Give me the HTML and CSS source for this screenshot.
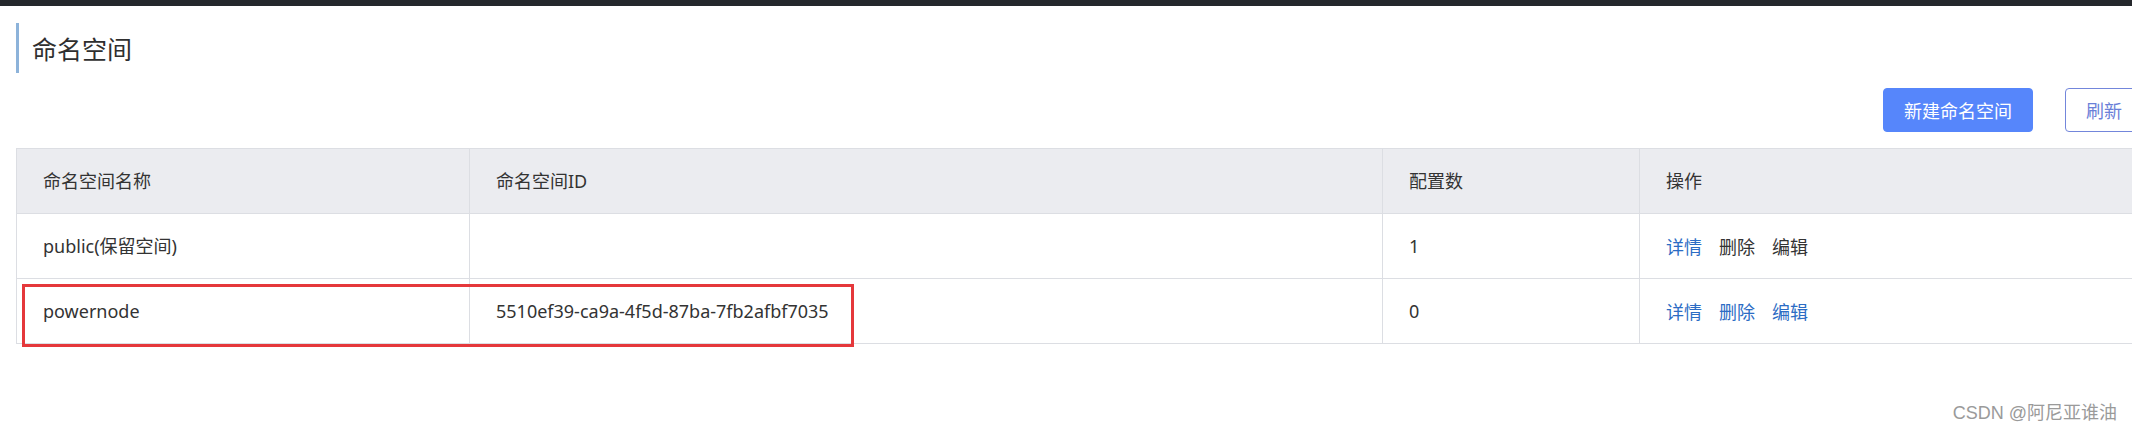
FILE: index.html
```html
<!DOCTYPE html>
<html lang="zh-CN">
<head>
<meta charset="utf-8">
<title>命名空间</title>
<link rel="stylesheet" href="styles.css">
</head>
<body>
<div class="topbar"></div>
<div class="page">
  <div class="title"><span class="title-text">命名空间</span></div>
  <div class="toolbar">
    <button class="btn btn-primary">新建命名空间</button>
    <button class="btn btn-secondary">刷新</button>
  </div>
  <div class="grid">
    <div class="row head">
      <div class="cell">命名空间名称</div>
      <div class="cell">命名空间ID</div>
      <div class="cell">配置数</div>
      <div class="cell">操作</div>
    </div>
    <div class="row">
      <div class="cell">public(保留空间)</div>
      <div class="cell"></div>
      <div class="cell">1</div>
      <div class="cell ops"><a class="op link">详情</a><a class="op">删除</a><a class="op">编辑</a></div>
    </div>
    <div class="row">
      <div class="cell">powernode</div>
      <div class="cell">5510ef39-ca9a-4f5d-87ba-7fb2afbf7035</div>
      <div class="cell">0</div>
      <div class="cell ops"><a class="op link">详情</a><a class="op link">删除</a><a class="op link">编辑</a></div>
    </div>
    <div class="annot"></div>
  </div>
</div>
<div class="watermark">CSDN @阿尼亚谁油</div>
</body>
</html>
```
FILE: styles.css
```css
html, body {
  margin: 0;
  padding: 0;
  overflow: hidden;
  background: #ffffff;
}
body {
  width: 2132px;
  height: 435px;
  position: relative;
  font-family: "Noto Sans", "Noto Sans CJK SC", sans-serif;
  color: #333333;
}
.topbar {
  height: 6px;
  background: #25282c;
}
.page {
  width: 2127px;
  margin-left: 16px;
}
.title {
  margin-top: 17px;
  height: 50px;
  border-left: 3px solid #8db3da;
  padding-left: 13px;
  display: flex;
  align-items: center;
}
.title-text {
  font-family: "Noto Sans CJK SC", sans-serif;
  font-size: 25px;
  line-height: 1;
  color: #2f2f2f;
}
.toolbar {
  margin-top: 15px;
  height: 44px;
  display: flex;
  justify-content: flex-end;
  gap: 32px;
}
.btn {
  height: 44px;
  padding: 0 20px;
  font-family: "Noto Sans CJK SC", sans-serif;
  font-size: 18px;
  line-height: 1;
  border-radius: 4px;
  box-sizing: border-box;
  cursor: pointer;
}
.btn-primary {
  background: #5686fb;
  color: #ffffff;
  border: 1px solid #5686fb;
}
.btn-secondary {
  background: #ffffff;
  color: #6a80d8;
  border: 1px solid #7386db;
}
.grid {
  margin-top: 16px;
  border: 1px solid #dcdee3;
  border-bottom: none;
  position: relative;
}
.row {
  display: grid;
  grid-template-columns: 452px 913px 257px 1fr;
  height: 65px;
  box-sizing: border-box;
  border-bottom: 1px solid #dcdee3;
}
.row.head {
  background: #ebecf0;
}
.cell {
  display: flex;
  align-items: center;
  padding-left: 26px;
  font-size: 18px;
  line-height: 1;
  box-sizing: border-box;
}
.cell + .cell {
  border-left: 1px solid #dcdee3;
}
.op {
  font-family: "Noto Sans CJK SC", sans-serif;
  margin-right: 17px;
  color: #333333;
  cursor: pointer;
}
.op.link {
  color: #2c6cc4;
}
.annot {
  position: absolute;
  left: 5px;
  top: 135px;
  width: 832px;
  height: 63px;
  border: 3px solid #e5383b;
  box-sizing: border-box;
}
.watermark {
  position: absolute;
  right: 15px;
  bottom: 10px;
  font-family: "Liberation Sans", "Noto Sans CJK SC", sans-serif;
  font-size: 18px;
  line-height: 24px;
  color: #9a9a9a;
}
```
